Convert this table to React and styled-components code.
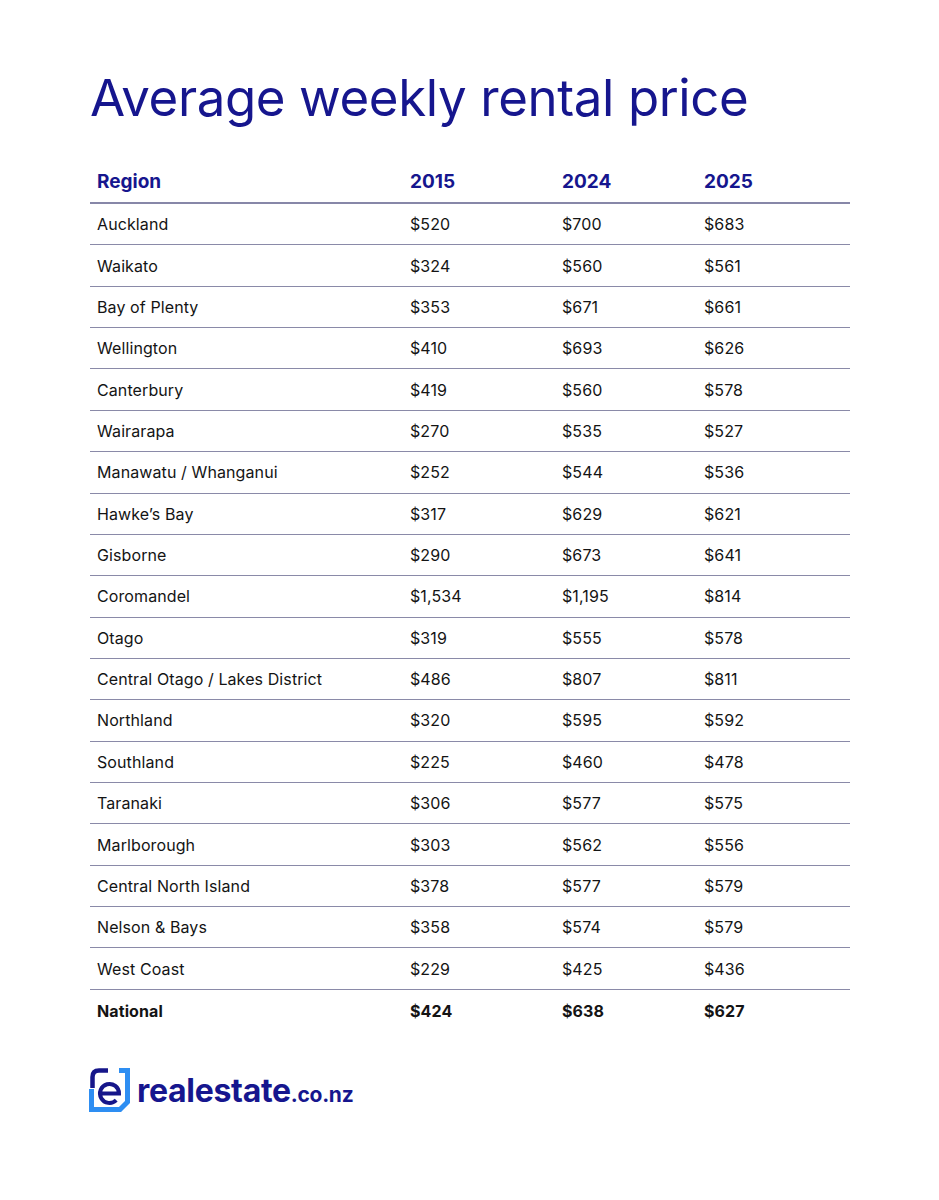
import React from "react"
import styled, { createGlobalStyle } from "styled-components"

const rows = [
    ["Auckland", "$520", "$700", "$683"],
    ["Waikato", "$324", "$560", "$561"],
    ["Bay of Plenty", "$353", "$671", "$661"],
    ["Wellington", "$410", "$693", "$626"],
    ["Canterbury", "$419", "$560", "$578"],
    ["Wairarapa", "$270", "$535", "$527"],
    ["Manawatu / Whanganui", "$252", "$544", "$536"],
    ["Hawke’s Bay", "$317", "$629", "$621"],
    ["Gisborne", "$290", "$673", "$641"],
    ["Coromandel", "$1,534", "$1,195", "$814"],
    ["Otago", "$319", "$555", "$578"],
    ["Central Otago / Lakes District", "$486", "$807", "$811"],
    ["Northland", "$320", "$595", "$592"],
    ["Southland", "$225", "$460", "$478"],
    ["Taranaki", "$306", "$577", "$575"],
    ["Marlborough", "$303", "$562", "$556"],
    ["Central North Island", "$378", "$577", "$579"],
    ["Nelson & Bays", "$358", "$574", "$579"],
    ["West Coast", "$229", "$425", "$436"],
]

const GlobalStyle = createGlobalStyle`
    body {
        margin: 0;
        background: #ffffff;
        font-family: Inter, "Liberation Sans", sans-serif;
    }
`

// realestate.co.nz mark: light blue bracket, navy "r" corner and "e"
const Logo = () => (
    <svg width="42" height="44" viewBox="0 0 42 44">
        <path d="M2.5 21 V41.5 H31 L38.5 34 V2.5 H30" fill="none" stroke="#2e8ef2" strokeWidth="5" />
        <path d="M3.5 20 V9 Q3.5 2.5 10 2.5 H19" fill="none" stroke="#16168a" strokeWidth="4.5" />
        <path d="M13 25.5 H30 A9.5 9.5 0 1 0 27.2 32.2" fill="none" stroke="#16168a" strokeWidth="4" />
    </svg>
)

const RentalTable = () => {
    return (
        <Page>
            <GlobalStyle />
            <Title>Average weekly rental price</Title>
            <Table>
                <HeadRow>
                    <HeadCell>Region</HeadCell>
                    <HeadCell>2015</HeadCell>
                    <HeadCell>2024</HeadCell>
                    <HeadCell>2025</HeadCell>
                </HeadRow>
                {rows.map((r) => (
                    <Row key={r[0]}>
                        {r.map((c, i) => (
                            <Cell key={i}>{c}</Cell>
                        ))}
                    </Row>
                ))}
                <Row $last>
                    <Cell $bold>National</Cell>
                    <Cell $bold>$424</Cell>
                    <Cell $bold>$638</Cell>
                    <Cell $bold>$627</Cell>
                </Row>
            </Table>
            <Brand>
                <Logo />
                <BrandName>
                    realestate<BrandTld>.co.nz</BrandTld>
                </BrandName>
            </Brand>
        </Page>
    )
}

const Page = styled.div`
    width: 939px;
    height: 1200px;
    box-sizing: border-box;
    padding: 63px 89px 0 90px;
    display: flex;
    flex-direction: column;
`
const Title = styled.h1`
    margin: 0;
    font-size: 51px;
    font-weight: 400;
    letter-spacing: -0.4px;
    color: #16168e;
    line-height: 70px;
`
const Table = styled.div`
    margin-top: 27px;
    display: flex;
    flex-direction: column;
`
const HeadRow = styled.div`
    display: grid;
    grid-template-columns: 313px 152px 142px 1fr;
    align-items: center;
    height: 42px;
    border-bottom: 2px solid #8787a8;
`
const HeadCell = styled.div`
    padding-left: 7px;
    font-size: 19px;
    font-weight: 700;
    color: #16168e;
`
const Row = styled.div`
    display: grid;
    grid-template-columns: 313px 152px 142px 1fr;
    align-items: center;
    height: 41.37px;
    box-sizing: border-box;
    border-bottom: ${(p) => (p.$last ? "none" : "1.5px solid #8a8aa8")};
`
const Cell = styled.div`
    padding-left: 7px;
    font-size: 16px;
    letter-spacing: 0.1px;
    font-weight: ${(p) => (p.$bold ? 700 : 400)};
    color: #141414;
`
const Brand = styled.div`
    margin-top: 37px;
    margin-left: -1px;
    display: flex;
    align-items: center;
    gap: 6px;
`
const BrandName = styled.div`
    font-size: 32px;
    font-weight: 700;
    color: #16168e;
    letter-spacing: -0.3px;
`
const BrandTld = styled.span`
    font-size: 21px;
`

export default RentalTable
